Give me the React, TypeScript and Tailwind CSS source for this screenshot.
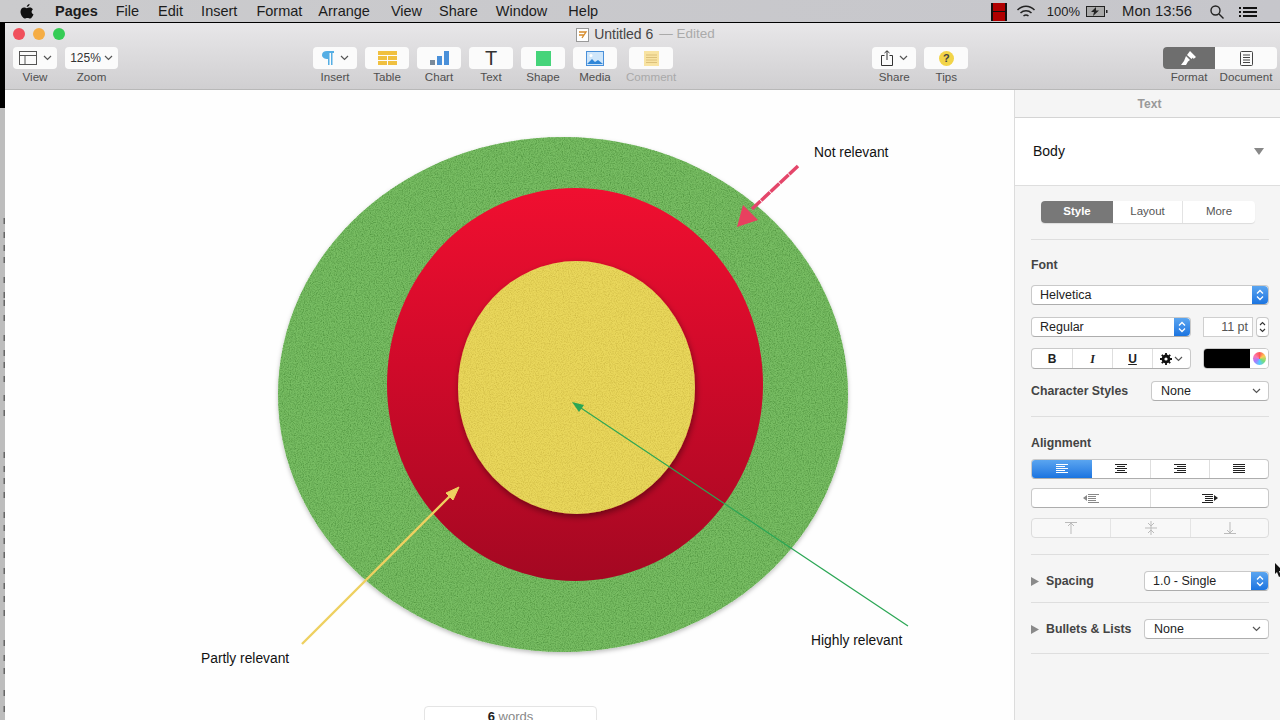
import React from "react";

const Chevron = ({ className = "" }: { className?: string }) => (
  <svg width="9" height="6" viewBox="0 0 9 6" className={className} fill="none" stroke="#555" strokeWidth="1.2">
    <path d="M1 1l3.5 3.5L8 1" />
  </svg>
);

const Updown = () => (
  <svg width="8" height="12" viewBox="0 0 8 12" fill="none" stroke="#fff" strokeWidth="1.3">
    <path d="M1 4.5L4 1.5l3 3M1 7.5l3 3 3-3" />
  </svg>
);

const Blue = ({ w = "w-[17px]" }: { w?: string }) => (
  <span className={`${w} self-stretch rounded-r-[4px] bg-gradient-to-b from-[#5aa5f0] to-[#1a74e0] flex items-center justify-center`}>
    <Updown />
  </span>
);

const ToolBtn = ({ label, children, w = "w-[44px]", dim = false, className = "" }: { label: string; children: React.ReactNode; w?: string; dim?: boolean; className?: string }) => (
  <div className={`flex flex-col items-center ${className}`}>
    <div className={`${w} h-[22px] rounded-[4px] bg-[#fbfbfb] flex items-center justify-center gap-[6px]`}>{children}</div>
    <span className={`mt-[1px] text-[11.6px] leading-[14px] whitespace-nowrap ${dim ? "text-[#a9a9a9]" : "text-[#4f4f4f]"}`}>{label}</span>
  </div>
);

const Line = ({ className = "" }: { className?: string }) => <div className={`h-px bg-[#dedede] ${className}`} />;

const ctrl = "rounded-[4px] bg-white border border-[#c9c9c9] border-b-[#adadad]";

const AlignIcon = ({ kind, color }: { kind: "l" | "c" | "r" | "j"; color: string }) => {
  const rows = [
    [0, 12],
    [kind === "l" ? 0 : kind === "c" ? 2 : kind === "r" ? 3 : 0, kind === "j" ? 12 : kind === "c" ? 8 : 9],
    [0, 12],
    [kind === "l" ? 0 : kind === "c" ? 2 : kind === "r" ? 3 : 0, kind === "j" ? 12 : kind === "c" ? 8 : 9],
    [0, 12],
  ];
  return (
    <svg width="12" height="10" viewBox="0 0 12 10">
      {rows.map((r, i) => (
        <rect key={i} x={r[0]} y={i * 2} width={r[1]} height="1" fill={color} />
      ))}
    </svg>
  );
};

const ticks = [218, 232, 245, 257, 277, 292, 300, 315, 335, 350, 362, 376, 395, 410, 452, 466, 478, 492, 512, 525, 538, 552, 568, 583, 596, 610, 640, 655, 668, 690, 706];

const Canvas = () => (
  <div className="relative flex-1 bg-[#fefefe] overflow-hidden">
    <svg width="1009" height="630" viewBox="5 90 1009 630" className="block">
      <defs>
        <filter id="grain" x="-5%" y="-5%" width="110%" height="110%">
          <feTurbulence type="fractalNoise" baseFrequency="0.85" numOctaves="2" seed="4" result="n" />
          <feColorMatrix in="n" type="matrix" values="0 0 0 0 0.08  0 0 0 0 0.3  0 0 0 0 0.05  2 0 0 0 -0.75" result="d" />
          <feComposite in="d" in2="SourceAlpha" operator="in" result="g" />
          <feMerge result="m">
            <feMergeNode in="SourceGraphic" />
            <feMergeNode in="g" />
          </feMerge>
          <feDropShadow in="m" dx="0" dy="2" stdDeviation="2" floodColor="#000" floodOpacity="0.25" />
        </filter>
        <filter id="grainLight" x="-5%" y="-5%" width="110%" height="110%">
          <feTurbulence type="fractalNoise" baseFrequency="0.85" numOctaves="2" seed="9" result="n" />
          <feColorMatrix in="n" type="matrix" values="0 0 0 0 0.55  0 0 0 0 0.42  0 0 0 0 0.04  1.4 0 0 0 -0.55" result="d" />
          <feComposite in="d" in2="SourceAlpha" operator="in" result="g" />
          <feMerge result="m">
            <feMergeNode in="SourceGraphic" />
            <feMergeNode in="g" />
          </feMerge>
          <feDropShadow in="m" dx="1" dy="3" stdDeviation="3" floodColor="#000" floodOpacity="0.4" />
        </filter>
        <linearGradient id="red" x1="0" y1="0" x2="0" y2="1">
          <stop offset="0" stopColor="#f00f30" />
          <stop offset="0.45" stopColor="#d00a2a" />
          <stop offset="1" stopColor="#a40822" />
        </linearGradient>
      </defs>
      <ellipse cx="563" cy="394.5" rx="285" ry="257.5" fill="#78bd64" filter="url(#grain)" />
      <ellipse cx="575" cy="384.5" rx="188" ry="196.5" fill="url(#red)" />
      <ellipse cx="576.5" cy="387.5" rx="118.5" ry="126.5" fill="#e9d75c" filter="url(#grainLight)" />
      <path d="M798 166L752 209" stroke="#e4466a" strokeWidth="3.5" strokeDasharray="12 0.8" />
      <path d="M737 227L743 205L758 220Z" fill="#e8405f" />
      <path d="M302 644L452 494" stroke="#eed060" strokeWidth="2.4" />
      <path d="M459 487L446 493L453 500Z" fill="#eed060" stroke="#eed060" />
      <path d="M908 626L581 408" stroke="#2aa654" strokeWidth="1.2" />
      <path d="M572 402L584 405L579 412Z" fill="#2aa654" />
    </svg>
    <span className="absolute left-[809px] top-[55px] text-[13.8px] leading-[16px] text-[#111]">Not relevant</span>
    <span className="absolute left-[196px] top-[561px] text-[13.8px] leading-[16px] text-[#111]">Partly relevant</span>
    <span className="absolute left-[806px] top-[543px] text-[13.8px] leading-[16px] text-[#111]">Highly relevant</span>
    <div className="absolute left-[419px] top-[616px] w-[173px] h-[30px] rounded-t-[4px] border border-[#e4e4e4] bg-white text-center pt-[1px] text-[13px] leading-[18px] text-[#888]">
      <b className="text-[#222]">6</b> words
    </div>
  </div>
);

const Inspector = () => (
  <div className="relative w-[266px] border-l border-[#dcdcdc] bg-[#f5f5f5] text-[#222] flex flex-col">
    <div className="h-[28px] border-b border-[#d4d4d4] flex items-center justify-center pl-[4px] text-[12px] font-bold text-[#999]">Text</div>
    <div className="h-[68px] bg-white border-b border-[#dedede] flex items-center justify-between pl-[18px] pr-[16px]">
      <span className="text-[14px] text-[#111]">Body</span>
      <svg width="10" height="7" viewBox="0 0 10 7"><path d="M0 0h10L5 7z" fill="#888" /></svg>
    </div>
    <div className="pl-[16px] pr-[11px] pt-[15px]">
      <div className="mx-[10px] h-[22px] w-[214px] rounded-[4px] bg-white flex text-[11.5px] text-[#555] shadow-[0_1px_1px_rgba(0,0,0,0.1)]">
        <div className="w-[72px] rounded-l-[4px] bg-[#787878] text-white font-bold flex items-center justify-center">Style</div>
        <div className="w-[70px] border-r border-[#e3e3e3] flex items-center justify-center">Layout</div>
        <div className="flex-1 flex items-center justify-center">More</div>
      </div>
      <Line className="mt-[16px]" />
      <div className="mt-[18px] text-[12.3px] leading-[14px] font-bold text-[#444]">Font</div>
      <div className={`mt-[13px] h-[20px] flex items-center justify-between pl-[8px] text-[12.5px] ${ctrl}`}>
        <span>Helvetica</span>
        <Blue w="w-[16px]" />
      </div>
      <div className="mt-[12px] flex h-[20px]">
        <div className={`w-[160px] flex items-center justify-between pl-[8px] text-[12.5px] ${ctrl}`}>
          <span>Regular</span>
          <Blue w="w-[16px]" />
        </div>
        <div className="ml-[12px] w-[50px] border border-[#cfcfcf] bg-white flex items-center justify-end pr-[4px] text-[12.5px] text-[#555]">11 pt</div>
        <div className={`ml-[3px] w-[13px] flex items-center justify-center ${ctrl}`}>
          <svg width="7" height="12" viewBox="0 0 7 12" fill="none" stroke="#333" strokeWidth="1.1">
            <path d="M1 4l2.5-2.5L6 4M1 8l2.5 2.5L6 8" />
          </svg>
        </div>
      </div>
      <div className="mt-[11px] flex h-[21px]">
        <div className={`w-[160px] flex items-center text-[12px] ${ctrl}`}>
          <div className="w-[40px] text-center font-bold">B</div>
          <div className="w-[40px] h-full border-l border-[#dedede] flex items-center justify-center font-bold italic font-['Liberation_Serif',serif]">I</div>
          <div className="w-[40px] h-full border-l border-[#dedede] flex items-center justify-center font-bold underline">U</div>
          <div className="flex-1 h-full border-l border-[#dedede] flex items-center justify-center gap-[2px]">
            <svg width="12" height="12" viewBox="0 0 12 12">
              <circle cx="6" cy="6" r="3.2" fill="none" stroke="#111" strokeWidth="2.4" />
              <path d="M6 0v12M0 6h12M1.8 1.8l8.4 8.4M10.2 1.8l-8.4 8.4" stroke="#111" strokeWidth="1.8" />
              <circle cx="6" cy="6" r="1.6" fill="#fff" />
            </svg>
            <Chevron />
          </div>
        </div>
        <div className="ml-[12px] w-[66px] flex rounded-[4px] overflow-hidden border border-[#c9c9c9]">
          <div className="w-[46px] bg-black" />
          <div className="flex-1 bg-white flex items-center justify-center">
            <span className="w-[13px] h-[13px] rounded-full bg-[conic-gradient(#f55,#fc5,#7d7,#5cf,#a7f,#f7a,#f55)]" />
          </div>
        </div>
      </div>
      <div className="mt-[12px] flex items-center justify-between h-[20px]">
        <span className="text-[12.3px] font-bold text-[#444]">Character Styles</span>
        <div className={`w-[118px] h-full flex items-center justify-between pl-[9px] pr-[7px] text-[12.5px] ${ctrl}`}>
          <span>None</span>
          <Chevron />
        </div>
      </div>
      <Line className="mt-[15px]" />
      <div className="mt-[19px] text-[12.3px] leading-[14px] font-bold text-[#444]">Alignment</div>
      <div className={`mt-[9px] h-[20px] flex overflow-hidden ${ctrl}`}>
        <div className="w-[60px] bg-gradient-to-b from-[#5aa5f0] to-[#1a74e0] flex items-center justify-center"><AlignIcon kind="l" color="#fff" /></div>
        <div className="w-[59px] border-r border-[#dedede] flex items-center justify-center"><AlignIcon kind="c" color="#222" /></div>
        <div className="w-[59px] border-r border-[#dedede] flex items-center justify-center"><AlignIcon kind="r" color="#222" /></div>
        <div className="flex-1 flex items-center justify-center"><AlignIcon kind="j" color="#222" /></div>
      </div>
      <div className={`mt-[9px] h-[20px] flex ${ctrl}`}>
        <div className="w-[119px] border-r border-[#dedede] flex items-center justify-center">
          <svg width="16" height="10" viewBox="0 0 16 10" fill="#888">
            <path d="M0 5l4-3v6z" />
            <path d="M5 1h11v1H5zM5 3h8v1H5zM5 5h8v1H5zM5 7h8v1H5zM5 9h11v1H5z" />
          </svg>
        </div>
        <div className="flex-1 flex items-center justify-center">
          <svg width="16" height="10" viewBox="0 0 16 10" fill="#222">
            <path d="M16 5l-4-3v6z" />
            <path d="M0 1h11v1H0zM3 3h8v1H3zM3 5h8v1H3zM3 7h8v1H3zM0 9h11v1H0z" />
          </svg>
        </div>
      </div>
      <div className="mt-[10px] h-[20px] flex rounded-[4px] border border-[#dcdcdc] bg-[#f8f8f8]">
        <div className="w-[79px] border-r border-[#e4e4e4] flex items-center justify-center">
          <svg width="12" height="12" viewBox="0 0 12 12" fill="none" stroke="#bbb"><path d="M0 .5h12M6 12V1M3 4l3-3 3 3" /></svg>
        </div>
        <div className="w-[80px] border-r border-[#e4e4e4] flex items-center justify-center">
          <svg width="12" height="14" viewBox="0 0 12 14" fill="none" stroke="#bbb"><path d="M0 7h12M6 0v14M3 2l3 3 3-3M3 12l3-3 3 3" /></svg>
        </div>
        <div className="flex-1 flex items-center justify-center">
          <svg width="12" height="12" viewBox="0 0 12 12" fill="none" stroke="#bbb"><path d="M0 11.5h12M6 0v11M3 8l3 3 3-3" /></svg>
        </div>
      </div>
      <Line className="mt-[16px]" />
      <div className="mt-[16px] h-[20px] flex items-center">
        <svg width="8" height="9" viewBox="0 0 8 9"><path d="M0 0l8 4.5L0 9z" fill="#8a8a8a" /></svg>
        <span className="ml-[7px] text-[12.3px] font-bold text-[#444]">Spacing</span>
        <div className={`ml-auto w-[125px] h-full flex items-center justify-between pl-[8px] text-[12.5px] ${ctrl}`}>
          <span>1.0 - Single</span>
          <Blue />
        </div>
      </div>
      <Line className="mt-[11px]" />
      <div className="mt-[16px] h-[20px] flex items-center">
        <svg width="8" height="9" viewBox="0 0 8 9"><path d="M0 0l8 4.5L0 9z" fill="#8a8a8a" /></svg>
        <span className="ml-[7px] text-[12.3px] font-bold text-[#444]">Bullets &amp; Lists</span>
        <div className={`ml-auto w-[125px] h-full flex items-center justify-between pl-[9px] pr-[7px] text-[12.5px] ${ctrl}`}>
          <span>None</span>
          <Chevron />
        </div>
      </div>
      <Line className="mt-[14px]" />
    </div>
    <svg width="9" height="15" viewBox="0 0 9 15" className="absolute left-[260px] top-[473px]">
      <path d="M0 0l8 8H4l2 5-2 1-2-5-2 2z" fill="#111" />
    </svg>
  </div>
);

export default function App() {
  return (
    <div className="w-[1280px] h-[720px] overflow-hidden flex flex-col bg-white font-['Liberation_Sans',Arial,sans-serif]">
      <div className="h-[23px] border-b border-black bg-gradient-to-r from-[#cbcbcd] to-[#c6c6cb] flex items-center text-[14.5px] text-[#1c1c1c] pl-[20px] pr-[23px] pt-[1px]">
        <svg width="14" height="16" viewBox="0 0 14 16" fill="#111" className="mr-[21px]">
          <path d="M9.6 0c.1 1.2-1.2 2.9-2.8 2.9C6.6 1.500 8.200.2 9.600 0zM12.900 5.400c-1.900 1.200-1.600 3.900.6 4.800-.6 1.900-2.100 4.300-3.400 4.300-1 0-1.300-.6-2.700-.6s-1.800.6-2.700.6C3 14.500.5 10.800.5 7.800c0-2.700 1.800-4.200 3.500-4.200 1.100 0 2.100.7 2.800.7s1.900-.8 3.200-.7c1 0 2.100.5 2.900 1.800z" />
        </svg>
        <span className="font-bold">Pages</span>
        <span className="ml-[18px]">File</span>
        <span className="ml-[19px]">Edit</span>
        <span className="ml-[18px]">Insert</span>
        <span className="ml-[19px]">Format</span>
        <span className="ml-[16px]">Arrange</span>
        <span className="ml-[21px]">View</span>
        <span className="ml-[17px]">Share</span>
        <span className="ml-[18px]">Window</span>
        <span className="ml-[21px]">Help</span>
        <svg width="16" height="18" viewBox="0 0 16 18" className="ml-auto">
          <rect width="16" height="18" fill="#b00000" />
          <path d="M0 0h2v18H0zM14 0h2v18h-2zM2 8h12v1H2z" fill="#111" />
        </svg>
        <svg width="20" height="14" viewBox="0 0 19 14" fill="none" stroke="#222" strokeWidth="1.5" className="ml-[9px]">
          <path d="M1 5c5-5 12-5 17 0M4 8c3-3 8-3 11 0M7 11c1.500-1.300 3.500-1.300 5 0" />
        </svg>
        <span className="ml-[11px] text-[13px]">100%</span>
        <svg width="22" height="11" viewBox="0 0 22 11" className="ml-[6px]">
          <rect x=".5" y=".5" width="18" height="10" fill="#aaa" stroke="#222" />
          <path d="M20 4h1.500v3H20z" fill="#222" />
          <path d="M10 1L5 6h3l-1 4 6-5.500h-3z" fill="#222" />
        </svg>
        <span className="ml-[14px] text-[14.8px] whitespace-nowrap">Mon 13:56</span>
        <svg width="14" height="14" viewBox="0 0 14 14" fill="none" stroke="#222" strokeWidth="1.4" className="ml-[18px]">
          <circle cx="5.500" cy="5.500" r="4.500" />
          <path d="M9 9l4.500 4.500" />
        </svg>
        <svg width="18" height="10" viewBox="0 0 18 10" fill="#111" className="ml-[15px]">
          <path d="M0 0h2v2H0zM4 0h14v2H4zM0 4h2v2H0zM4 4h14v2H4zM0 8h2v2H0zM4 8h14v2H4z" />
        </svg>
      </div>
      <div className="flex-1 min-h-0 flex">
        <div className="w-[5px] flex flex-col">
          <div className="h-[85px] bg-black" />
          <div className="flex-1 bg-[#bdbdbd]">
            <svg width="5" height="612" viewBox="0 108 5 612" className="block">
              {ticks.map((y) => (
                <rect key={y} x="3.500" y={y} width="1.500" height="6" fill="#666" />
              ))}
            </svg>
          </div>
        </div>
        <div className="flex-1 flex flex-col">
          <div className="relative h-[67px] border-b border-[#b8b8b8] bg-gradient-to-b from-[#e8e7e9] to-[#d0cfd1] shrink-0">
            <div className="flex items-center h-[22px] pl-[8px]">
              <span className="w-[12px] h-[12px] rounded-full bg-[#f0505c]" />
              <span className="ml-[8px] w-[12px] h-[12px] rounded-full bg-[#f5ad45]" />
              <span className="ml-[8px] w-[12px] h-[12px] rounded-full bg-[#35cc55]" />
              <div className="flex-1 flex items-center justify-center pl-[2px] pt-[1px] text-[14px] text-[#444]">
                <svg width="13" height="14" viewBox="0 0 13 14" className="mr-[5px]">
                  <rect x=".5" y=".5" width="12" height="13" fill="#fff" stroke="#999" />
                  <path d="M3 4h7L6 10M3 7h5" fill="none" stroke="#d68a2a" strokeWidth="1.300" />
                </svg>
                <span>Untitled 6</span>
                <span className="ml-[6px] text-[13.5px] text-[#aaa]">— Edited</span>
              </div>
              <div className="w-[56px]" />
            </div>
            <div className="flex mt-[2px] pl-[8px] pr-[3px]">
              <ToolBtn label="View" w="w-[44px]">
                <svg width="18" height="14" viewBox="0 0 18 14" fill="none" stroke="#555"><rect x=".5" y=".5" width="17" height="13" /><path d="M.5 4.500h17M6 4.500v9" /></svg>
                <Chevron />
              </ToolBtn>
              <ToolBtn label="Zoom" w="w-[53px]" className="ml-[8px]">
                <span className="text-[12px] text-[#333]">125%</span>
                <Chevron className="-ml-[3px]" />
              </ToolBtn>
              <ToolBtn label="Insert" className="ml-[195px]">
                <svg width="12" height="14" viewBox="0 0 12 14" fill="#55aee4"><path d="M5 0h7v2h-1.500v12H9V2H7.500v12H6V8C2.500 8 0 6.500 0 4s2-4 5-4z" /></svg>
                <Chevron />
              </ToolBtn>
              <ToolBtn label="Table" className="ml-[8px]">
                <svg width="19" height="14" viewBox="0 0 19 14" fill="#f0c040"><path d="M0 0h19v4H0zM0 5h9v4H0zM10 5h9v4h-9zM0 10h9v4H0zM10 10h9v4h-9z" /></svg>
              </ToolBtn>
              <ToolBtn label="Chart" className="ml-[8px]">
                <svg width="19" height="14" viewBox="0 0 19 14" fill="#4a90d9"><rect y="9" width="5" height="5" fill="#7a8a9a" /><rect x="7" y="5" width="5" height="9" /><rect x="14" width="5" height="14" /></svg>
              </ToolBtn>
              <ToolBtn label="Text" className="ml-[8px]">
                <span className="text-[20px] leading-[20px] text-[#333]">T</span>
              </ToolBtn>
              <ToolBtn label="Shape" className="ml-[8px]">
                <span className="w-[15px] h-[15px] bg-[#45d47a]" />
              </ToolBtn>
              <ToolBtn label="Media" className="ml-[8px]">
                <svg width="18" height="15" viewBox="0 0 18 15"><rect x=".5" y=".5" width="17" height="14" fill="#cfe6fa" stroke="#4a90d9" /><path d="M1 13l5-5 3 3 3-2 5 4z" fill="#2f86d8" /><circle cx="5" cy="4.500" r="1.500" fill="#fff" /></svg>
              </ToolBtn>
              <ToolBtn label="Comment" w="w-[44px]" dim className="ml-[9px]">
                <svg width="15" height="15" viewBox="0 0 15 15"><rect width="15" height="15" fill="#f8e3a2" /><path d="M2 4h11M2 6.500h11M2 9h11M2 11.500h11" stroke="#dcc07a" /></svg>
              </ToolBtn>
              <ToolBtn label="Share" className="ml-[196px]">
                <svg width="12" height="16" viewBox="0 0 12 16" fill="none" stroke="#333"><path d="M3.500 5.500H.5v10h11v-10h-3M6 10V.8M3.500 3L6 .8 8.500 3" /></svg>
                <Chevron />
              </ToolBtn>
              <ToolBtn label="Tips" className="ml-[8px]">
                <span className="w-[15px] h-[15px] rounded-full bg-[#f2d448] text-[11px] leading-[15px] text-center font-bold text-[#444]">?</span>
              </ToolBtn>
              <div className="ml-auto flex flex-col">
                <div className="h-[22px] w-[114px] rounded-[4px] flex overflow-hidden bg-[#fbfbfb]">
                  <div className="w-[52px] bg-[#6e6e6e] flex items-center justify-center">
                    <svg width="16" height="14" viewBox="0 0 16 14" fill="#fff"><path d="M9 0l6 6-2.500 2L12 6.500 10.500 8 6 4zM5 5l4 4-2 1.500L5 14H0l3-4z" /></svg>
                  </div>
                  <div className="flex-1 flex items-center justify-center">
                    <svg width="13" height="15" viewBox="0 0 13 15" fill="none" stroke="#444"><rect x=".5" y=".5" width="12" height="14" rx="1" /><path d="M3 4h7M3 6.500h7M3 9h7M3 11.500h7" /></svg>
                  </div>
                </div>
                <div className="flex mt-[1px] text-[11.6px] leading-[14px] text-[#4f4f4f]">
                  <span className="w-[52px] text-center">Format</span>
                  <span className="flex-1 text-center whitespace-nowrap">Document</span>
                </div>
              </div>
            </div>
          </div>
          <div className="flex-1 min-h-0 flex">
            <Canvas />
            <Inspector />
          </div>
        </div>
      </div>
    </div>
  );
}
